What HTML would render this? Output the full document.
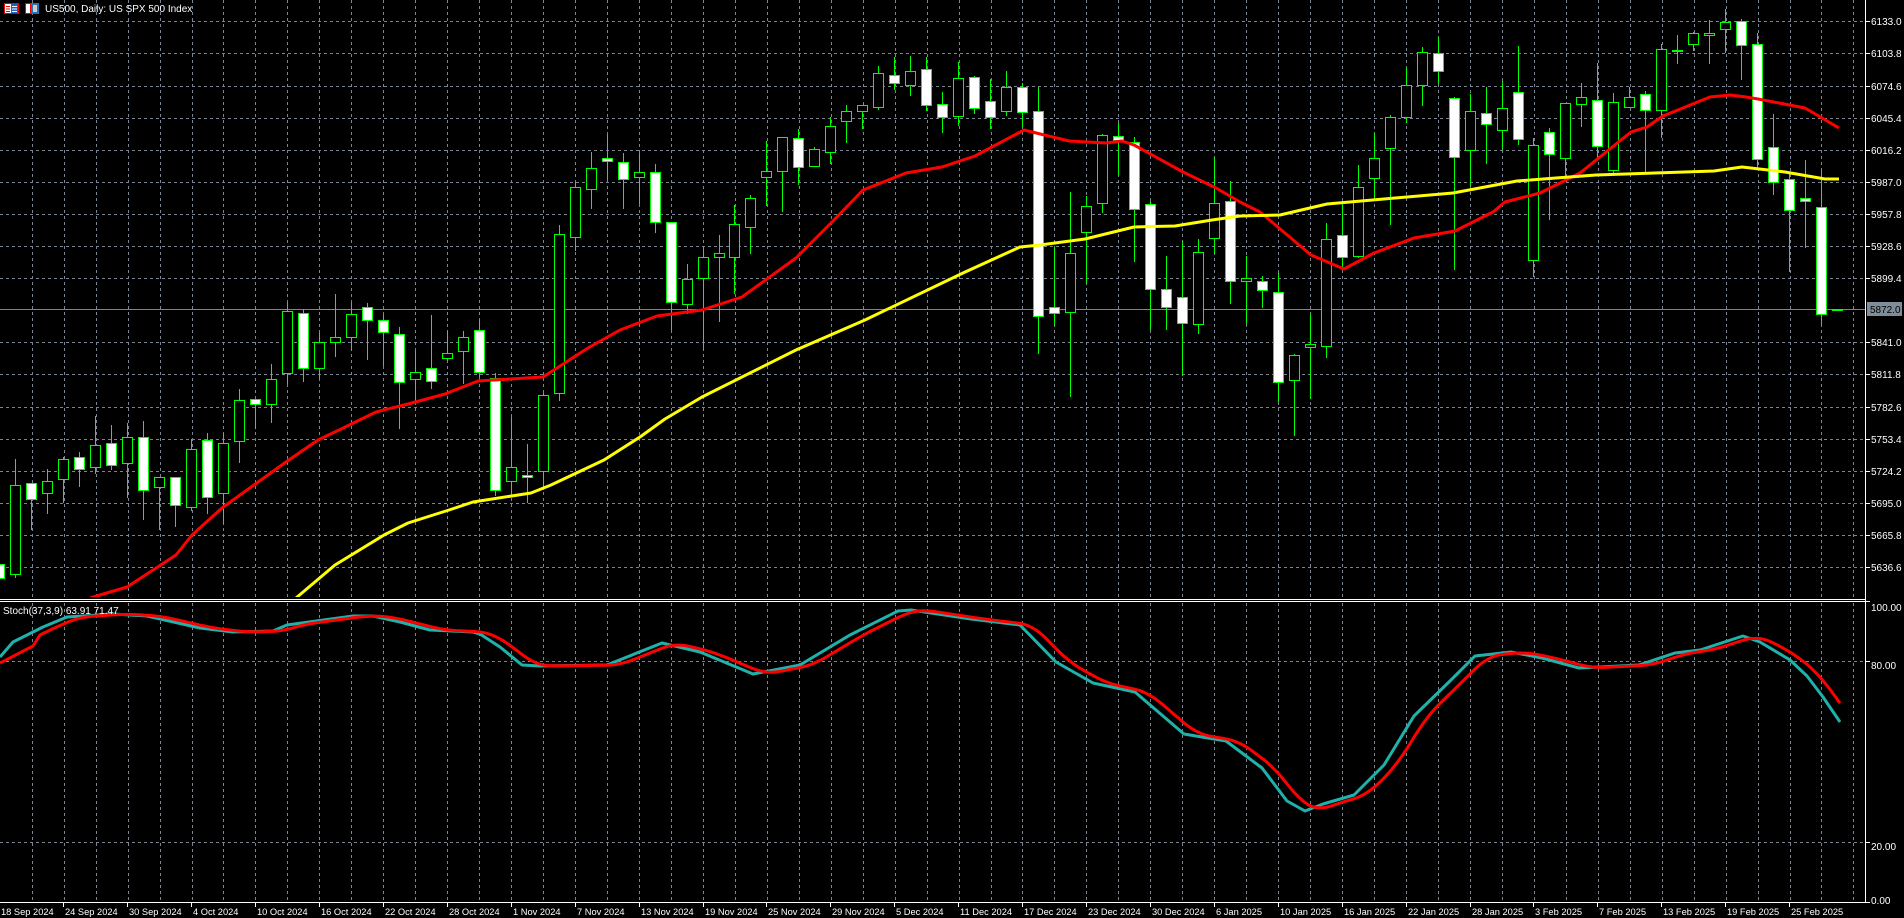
<!DOCTYPE html>
<html><head><meta charset="utf-8">
<style>
html,body{margin:0;padding:0;background:#000;width:1904px;height:918px;overflow:hidden}
svg{display:block}
text{font-family:"Liberation Sans",sans-serif;font-size:10px;fill:#fff}
text.d{font-size:9.3px}
</style></head>
<body>
<svg id="s" width="1904" height="918" xmlns="http://www.w3.org/2000/svg">
<rect width="1904" height="918" fill="#000"/>
<g id="grid" stroke="#7b8591" stroke-width="1" stroke-dasharray="3,3" shape-rendering="crispEdges"></g>
<line x1="0" y1="309.5" x2="1865" y2="309.5" stroke="#7b8591" stroke-width="1" shape-rendering="crispEdges"/>
<g id="candles" shape-rendering="crispEdges"></g>
<polyline id="red" fill="none" stroke="#ff0000" stroke-width="3" stroke-linejoin="round"/>
<polyline id="yel" fill="none" stroke="#ffff00" stroke-width="3" stroke-linejoin="round"/>
<polyline id="scy" fill="none" stroke="#20b2aa" stroke-width="3" stroke-linejoin="round"/>
<polyline id="srd" fill="none" stroke="#ff0000" stroke-width="3" stroke-linejoin="round"/>
<rect x="0" y="597" width="1866" height="5" fill="#000"/>
<g stroke="#fff" stroke-width="1" shape-rendering="crispEdges">
<line x1="0" y1="599.5" x2="1865" y2="599.5"/>
<line x1="0" y1="601.5" x2="1865" y2="601.5"/>
<line x1="1865.5" y1="0" x2="1865.5" y2="902"/>
<line x1="0" y1="902.5" x2="1866" y2="902.5"/>
</g>
<g id="axis"></g>
<rect x="1867" y="302" width="35" height="14" fill="#7f8c99"/>
<text x="1870" y="313" style="fill:#000">5872.0</text>
<rect x="4.5" y="3.5" width="14" height="10" fill="#fff" stroke="#e00" stroke-width="1"/>
<rect x="11" y="4" width="7" height="9" fill="#2060c0"/>
<line x1="6" y1="6.5" x2="10" y2="6.5" stroke="#e00"/><line x1="6" y1="9" x2="10" y2="9" stroke="#e00"/><line x1="6" y1="11.5" x2="10" y2="11.5" stroke="#e00"/>
<line x1="12" y1="6.5" x2="17" y2="6.5" stroke="#fff"/><line x1="12" y1="9" x2="17" y2="9" stroke="#fff"/><line x1="12" y1="11.5" x2="17" y2="11.5" stroke="#fff"/>
<rect x="25.5" y="3.5" width="5" height="10" fill="#fff" stroke="#e00"/>
<rect x="31" y="3" width="8" height="11" fill="#2a6fb0"/>
<rect x="33" y="5" width="4" height="7" fill="#ccc"/>
<text x="45" y="12">US500, Daily:  US SPX 500 Index</text>
<text x="3" y="614">Stoch(37,3,9) 63.91 71.47</text>
</svg>
<script>
var NS="http://www.w3.org/2000/svg";
function el(p,t,a,txt){var e=document.createElementNS(NS,t);for(var k in a)e.setAttribute(k,a[k]);if(txt!==undefined)e.textContent=txt;p.appendChild(e);return e;}
var grid=document.getElementById('grid');
var labels=["6133.0","6103.8","6074.6","6045.4","6016.2","5987.0","5957.8","5928.6","5899.4","","5841.0","5811.8","5782.6","5753.4","5724.2","5695.0","5665.8","5636.6"];
var ys=[];for(var k=0;k<18;k++)ys.push(Math.round(21.3+32.1*k));
ys.forEach(function(y,k){ if(k==9) return; el(grid,'line',{x1:0,y1:y+.5,x2:1865,y2:y+.5});});
[661,842].forEach(function(y){el(grid,'line',{x1:0,y1:y+.5,x2:1865,y2:y+.5});});
for(var k=0;k<58;k++){var x=Math.round(31.7+31.96*k);el(grid,'line',{x1:x+.5,y1:0,x2:x+.5,y2:598});el(grid,'line',{x1:x+.5,y1:603,x2:x+.5,y2:902});}
var ax=document.getElementById('axis');
ys.forEach(function(y,k){ if(k==9) return; el(ax,'line',{x1:1865,y1:y+.5,x2:1870,y2:y+.5,stroke:'#fff'}); el(ax,'text',{x:1871,y:y+4},labels[k]);});
[[601,"100.00",607],[661,"80.00",665],[842,"20.00",846],[902,"0.00",900]].forEach(function(a){el(ax,'line',{x1:1865,y1:a[0]+.5,x2:1870,y2:a[0]+.5,stroke:'#fff'});el(ax,'text',{x:1871,y:a[2]+4},a[1]);});
var dates=["18 Sep 2024","24 Sep 2024","30 Sep 2024","4 Oct 2024","10 Oct 2024","16 Oct 2024","22 Oct 2024","28 Oct 2024","1 Nov 2024","7 Nov 2024","13 Nov 2024","19 Nov 2024","25 Nov 2024","29 Nov 2024","5 Dec 2024","11 Dec 2024","17 Dec 2024","23 Dec 2024","30 Dec 2024","6 Jan 2025","10 Jan 2025","16 Jan 2025","22 Jan 2025","28 Jan 2025","3 Feb 2025","7 Feb 2025","13 Feb 2025","19 Feb 2025","25 Feb 2025"];
dates.forEach(function(d,k){var x=Math.round(63.92*k-0.6);if(k>0)el(ax,'line',{x1:x+.5,y1:902,x2:x+.5,y2:907,stroke:'#fff'});el(ax,'text',{x:x+2,y:915,'class':'d'},d);});
var C=[[564,578,560,578,1],[485,574,459,577,0],[483,499,483,529,1],[481,493,469,513,0],[459,479,457,502,0],[457,469,452,486,1],[445,467,416,473,0],[443,465,425,469,1],[437,463,423,497,0],[437,490,421,519,1],[477,487,477,529,0],[477,505,477,526,1],[449,507,439,510,0],[440,497,433,513,1],[443,493,433,523,0],[400,441,389,462,0],[399,404,399,428,1],[379,404,364,422,0],[311,373,303,383,0],[313,368,309,381,1],[342,368,333,378,0],[337,342,294,356,0],[314,337,303,350,0],[307,320,303,359,1],[320,332,315,365,1],[334,382,327,428,1],[372,379,351,400,0],[368,381,315,388,1],[353,358,331,360,0],[337,351,331,383,0],[330,372,320,377,1],[378,490,373,495,1],[467,481,417,495,0],[475,477,444,502,1],[395,471,393,489,0],[234,393,225,400,0],[187,237,182,250,0],[168,189,152,208,0],[158,161,135,179,1],[162,179,153,208,1],[172,177,153,203,0],[172,222,164,232,1],[222,302,222,329,1],[279,304,264,313,0],[257,278,247,349,0],[253,257,235,321,0],[224,257,205,293,0],[198,227,195,253,0],[171,177,141,205,0],[137,171,137,211,0],[138,167,129,184,1],[149,166,147,166,0],[126,152,117,163,0],[111,121,105,142,0],[105,111,105,128,0],[73,107,66,109,0],[75,83,57,89,1],[71,85,56,95,0],[69,105,57,110,1],[104,117,92,132,1],[78,116,62,125,0],[77,108,76,113,1],[101,117,79,128,1],[87,111,71,115,0],[87,112,83,126,1],[111,316,87,353,1],[307,313,247,325,1],[253,312,192,396,0],[206,232,196,283,0],[135,203,134,212,0],[136,140,123,174,1],[142,209,137,261,1],[204,289,201,329,1],[289,307,256,329,1],[297,323,241,375,1],[252,324,239,333,0],[203,238,157,253,0],[201,281,181,303,1],[278,281,256,323,0],[281,290,276,307,1],[292,382,273,401,1],[355,380,354,435,0],[344,347,314,398,0],[239,346,223,357,0],[235,257,203,267,1],[187,256,165,257,0],[158,178,133,200,0],[117,148,115,224,0],[85,117,68,122,0],[52,85,47,105,0],[53,71,37,83,1],[98,157,97,269,1],[111,150,94,185,0],[113,124,87,163,1],[108,130,81,149,0],[92,139,46,144,1],[145,260,138,276,0],[132,154,128,219,1],[103,158,103,178,0],[97,104,83,126,0],[100,146,63,157,1],[102,170,93,172,0],[97,107,87,107,0],[94,110,91,173,1],[49,110,44,137,0],[50,51,35,63,1],[33,44,32,50,0],[33,35,20,63,0],[22,29,9,52,0],[21,45,19,79,1],[44,159,33,167,1],[147,182,114,194,1],[179,210,173,271,1],[198,201,160,247,1],[207,314,169,324,1],[309,310,309,310,0]];
var cg=document.getElementById('candles');
C.forEach(function(c,i){var x=Math.round(15.98*i-0.6);
 el(cg,'line',{x1:x+.5,y1:c[2],x2:x+.5,y2:c[3]+1,stroke:'#00ff00'});
 var h=Math.max(c[1]-c[0],1);
 el(cg,'rect',{x:x-4.5,y:c[0]+.5,width:10,height:h,fill:c[4]?'#fff':'#000',stroke:'#00ff00','stroke-width':1});
});
function pl(id,pts){document.getElementById(id).setAttribute('points',pts.map(function(p){return p[0]+','+p[1]}).join(' '));}
pl('red',[[90,598],[127,587],[176,555],[192,535],[222,508],[286,462],[318,440],[339,430],[376,412],[408,404],[445,394],[478,381],[543,377],[588,348],[620,330],[657,316],[702,310],[742,297],[796,258],[832,222],[863,190],[906,173],[942,167],[975,156],[1024,130],[1069,141],[1106,143],[1122,141],[1134,145],[1183,172],[1216,188],[1240,202],[1260,212],[1311,255],[1344,269],[1374,253],[1414,238],[1455,231],[1493,212],[1505,202],[1540,193],[1580,173],[1631,132],[1647,127],[1663,116],[1710,97],[1730,95],[1746,97],[1758,99],[1805,108],[1839,128]]);
pl('yel',[[296,598],[335,565],[384,535],[408,523],[449,510],[473,502],[531,493],[551,485],[604,460],[640,437],[665,419],[702,397],[796,350],[865,320],[963,273],[1020,247],[1040,245],[1085,239],[1134,227],[1175,226],[1212,220],[1240,216],[1280,215],[1327,204],[1453,193],[1517,181],[1556,178],[1596,175],[1655,173],[1714,171],[1742,167],[1785,172],[1825,179],[1839,179]]);
var cy=[[0,657],[13,642],[43,627],[67,617],[83,616],[113,614],[147,616],[200,628],[233,632],[273,631],[287,625],[353,616],[373,616],[400,622],[430,630],[473,632],[480,634],[500,647],[522,665],[540,666],[607,665],[662,643],[700,652],[753,674],[800,665],[850,635],[898,611],[911,610],[971,619],[1020,625],[1056,662],[1093,683],[1135,692],[1184,734],[1226,741],[1262,768],[1287,801],[1305,811],[1323,804],[1354,795],[1384,765],[1414,716],[1451,680],[1475,656],[1511,652],[1542,658],[1579,668],[1639,665],[1675,653],[1700,650],[1743,636],[1760,642],[1790,660],[1807,676],[1823,697],[1840,722]];
pl('scy',cy);
function cyAt(x){if(x<=cy[0][0])return cy[0][1];for(var i=1;i<cy.length;i++){if(x<=cy[i][0]){var a=cy[i-1],b=cy[i];return a[1]+(b[1]-a[1])*(x-a[0])/(b[0]-a[0]);}}return cy[cy.length-1][1];}
var rd=[[0,663],[33,646]];
for(var x=40;x<=1840;x+=4){var s=0,n=0;for(var t=x-26;t<=x;t+=2){s+=cyAt(t);n++;}rd.push([x,+(s/n).toFixed(1)]);}
pl('srd',rd);
</script>
</body></html>
